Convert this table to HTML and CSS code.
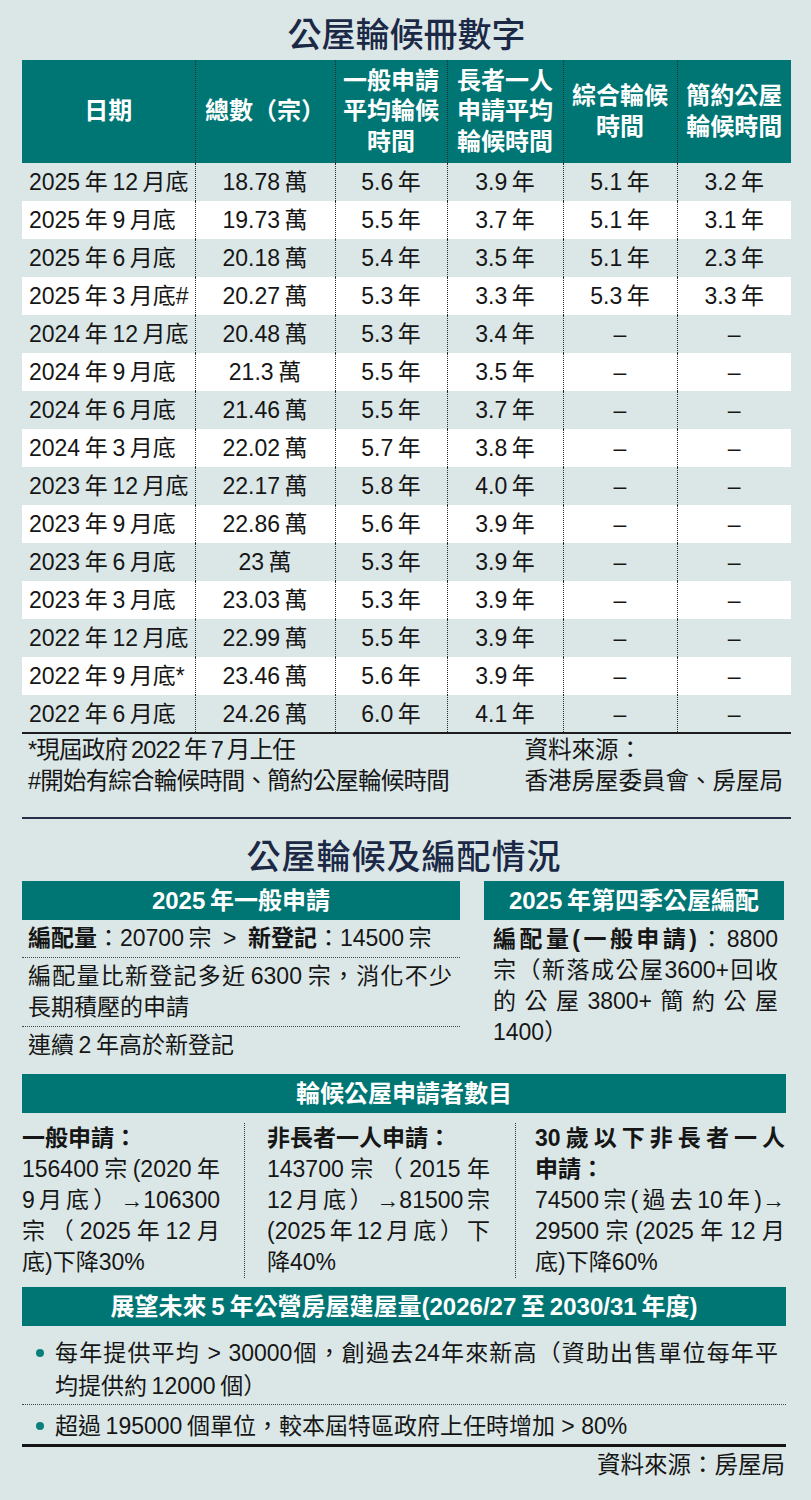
FILE: index.html
```html
<!DOCTYPE html>
<html lang="zh-Hant">
<head>
<meta charset="utf-8">
<title>公屋輪候冊數字</title>
<link rel="stylesheet" href="styles.css">
</head>
<body>
<main class="page">
  <h1 class="title">公屋輪候冊數字</h1>
  <table class="wait">
    <colgroup>
      <col class="c1"><col class="c2"><col class="c3"><col class="c4"><col class="c5"><col class="c6">
    </colgroup>
    <thead>
      <tr>
        <th>日期</th>
        <th>總數（宗）</th>
        <th>一般申請<br>平均輪候<br>時間</th>
        <th>長者一人<br>申請平均<br>輪候時間</th>
        <th>綜合輪候<br>時間</th>
        <th>簡約公屋<br>輪候時間</th>
      </tr>
    </thead>
    <tbody>
      <tr><td>2025&thinsp;年&thinsp;12&thinsp;月底</td><td>18.78&thinsp;萬</td><td>5.6&thinsp;年</td><td>3.9&thinsp;年</td><td>5.1&thinsp;年</td><td>3.2&thinsp;年</td></tr>
      <tr><td>2025&thinsp;年&thinsp;9&thinsp;月底</td><td>19.73&thinsp;萬</td><td>5.5&thinsp;年</td><td>3.7&thinsp;年</td><td>5.1&thinsp;年</td><td>3.1&thinsp;年</td></tr>
      <tr><td>2025&thinsp;年&thinsp;6&thinsp;月底</td><td>20.18&thinsp;萬</td><td>5.4&thinsp;年</td><td>3.5&thinsp;年</td><td>5.1&thinsp;年</td><td>2.3&thinsp;年</td></tr>
      <tr><td>2025&thinsp;年&thinsp;3&thinsp;月底#</td><td>20.27&thinsp;萬</td><td>5.3&thinsp;年</td><td>3.3&thinsp;年</td><td>5.3&thinsp;年</td><td>3.3&thinsp;年</td></tr>
      <tr><td>2024&thinsp;年&thinsp;12&thinsp;月底</td><td>20.48&thinsp;萬</td><td>5.3&thinsp;年</td><td>3.4&thinsp;年</td><td>–</td><td>–</td></tr>
      <tr><td>2024&thinsp;年&thinsp;9&thinsp;月底</td><td>21.3&thinsp;萬</td><td>5.5&thinsp;年</td><td>3.5&thinsp;年</td><td>–</td><td>–</td></tr>
      <tr><td>2024&thinsp;年&thinsp;6&thinsp;月底</td><td>21.46&thinsp;萬</td><td>5.5&thinsp;年</td><td>3.7&thinsp;年</td><td>–</td><td>–</td></tr>
      <tr><td>2024&thinsp;年&thinsp;3&thinsp;月底</td><td>22.02&thinsp;萬</td><td>5.7&thinsp;年</td><td>3.8&thinsp;年</td><td>–</td><td>–</td></tr>
      <tr><td>2023&thinsp;年&thinsp;12&thinsp;月底</td><td>22.17&thinsp;萬</td><td>5.8&thinsp;年</td><td>4.0&thinsp;年</td><td>–</td><td>–</td></tr>
      <tr><td>2023&thinsp;年&thinsp;9&thinsp;月底</td><td>22.86&thinsp;萬</td><td>5.6&thinsp;年</td><td>3.9&thinsp;年</td><td>–</td><td>–</td></tr>
      <tr><td>2023&thinsp;年&thinsp;6&thinsp;月底</td><td>23&thinsp;萬</td><td>5.3&thinsp;年</td><td>3.9&thinsp;年</td><td>–</td><td>–</td></tr>
      <tr><td>2023&thinsp;年&thinsp;3&thinsp;月底</td><td>23.03&thinsp;萬</td><td>5.3&thinsp;年</td><td>3.9&thinsp;年</td><td>–</td><td>–</td></tr>
      <tr><td>2022&thinsp;年&thinsp;12&thinsp;月底</td><td>22.99&thinsp;萬</td><td>5.5&thinsp;年</td><td>3.9&thinsp;年</td><td>–</td><td>–</td></tr>
      <tr><td>2022&thinsp;年&thinsp;9&thinsp;月底*</td><td>23.46&thinsp;萬</td><td>5.6&thinsp;年</td><td>3.9&thinsp;年</td><td>–</td><td>–</td></tr>
      <tr><td>2022&thinsp;年&thinsp;6&thinsp;月底</td><td>24.26&thinsp;萬</td><td>6.0&thinsp;年</td><td>4.1&thinsp;年</td><td>–</td><td>–</td></tr>
    </tbody>
  </table>

  <div class="notes">
    <div class="notes-l">
      <p>*現屆政府&thinsp;2022&thinsp;年&thinsp;7&thinsp;月上任</p>
      <p>#開始有綜合輪候時間、簡約公屋輪候時間</p>
    </div>
    <div class="notes-r">
      <p>資料來源：</p>
      <p>香港房屋委員會、房屋局</p>
    </div>
  </div>

  <h2 class="title title2">公屋輪候及編配情況</h2>

  <div class="alloc">
    <section class="alloc-l">
      <h3 class="bar">2025&thinsp;年一般申請</h3>
      <ul class="items">
        <li><b>編配量</b>：20700&thinsp;宗&ensp;&gt;&ensp;<b>新登記</b>：14500&thinsp;宗</li>
        <li><span class="j">編配量比新登記多近&thinsp;6300&thinsp;宗，消化不少</span>長期積壓的申請</li>
        <li>連續&thinsp;2&thinsp;年高於新登記</li>
      </ul>
    </section>
    <section class="alloc-r">
      <h3 class="bar">2025&thinsp;年第四季公屋編配</h3>
      <p class="rtext"><span class="j"><b>編配量(一般申請)</b>：8800</span><span class="j">宗（新落成公屋3600+回收</span><span class="j">的公屋3800+簡約公屋</span><span class="l">1400）</span></p>
    </section>
  </div>

  <section class="queue">
    <h3 class="bar">輪候公屋申請者數目</h3>
    <div class="cols">
      <div class="col">
        <b class="l">一般申請：</b>
        <span class="j">156400宗(2020年</span>
        <span class="j">9月底）→106300</span>
        <span class="j">宗（2025年12月</span>
        <span class="l">底)下降30%</span>
      </div>
      <div class="col">
        <b class="l">非長者一人申請：</b>
        <span class="j">143700宗（2015年</span>
        <span class="j">12月底）→81500宗</span>
        <span class="j">(2025年12月底）下</span>
        <span class="l">降40%</span>
      </div>
      <div class="col">
        <b class="j">30歲以下非長者一人</b>
        <b class="l">申請：</b>
        <span class="j">74500宗(過去10年)→</span>
        <span class="j">29500宗(2025年12月</span>
        <span class="l">底)下降60%</span>
      </div>
    </div>
  </section>

  <section class="outlook">
    <h3 class="bar">展望未來&thinsp;5&thinsp;年公營房屋建屋量(2026/27&thinsp;至&thinsp;2030/31&thinsp;年度)</h3>
    <ul class="bullets">
      <li><div><span class="j">每年提供平均 &gt; 30000個，創過去24年來新高（資助出售單位每年平</span>均提供約&thinsp;12000&thinsp;個）</div></li>
      <li><div>超過&thinsp;195000&thinsp;個單位，較本屆特區政府上任時增加 &gt; 80%</div></li>
    </ul>
    <p class="source">資料來源：房屋局</p>
  </section>
</main>
</body>
</html>
```

FILE: styles.css
```css
* {
  box-sizing: border-box;
  margin: 0;
  padding: 0;
}

html,
body {
  background: #dbe7e7;
}

body {
  width: 811px;
  font-family: "Liberation Sans", "Noto Sans CJK TC", sans-serif;
  color: #161616;
  font-size: 23px;
}

.page {
  padding-left: 22px;
}

.title {
  width: 769px;
  padding-top: 6px;
  font-family: "Noto Sans CJK TC", sans-serif;
  font-size: 34px;
  font-weight: 500;
  line-height: 54px;
  color: #1b2946;
  text-align: center;
}

.title2 {
  width: 764px;
  padding-top: 10px;
  line-height: 52px;
  letter-spacing: 1px;
}

/* ---------- waiting list table ---------- */
.wait {
  width: 769px;
  border-collapse: collapse;
  table-layout: fixed;
  font-size: 23px;
}

.c1 { width: 173px; }
.c2 { width: 140px; }
.c3 { width: 112px; }
.c4 { width: 116px; }
.c5 { width: 114px; }
.c6 { width: 114px; }

.wait th {
  height: 103px;
  padding: 0;
  background: #007674;
  color: #fff;
  font-size: 24px;
  font-weight: 700;
  line-height: 30.5px;
  text-align: center;
  vertical-align: middle;
}

.wait td {
  height: 38px;
  padding: 0;
  line-height: 36px;
  text-align: center;
  white-space: nowrap;
  background: #dbe7e7;
}

.wait tbody tr:nth-child(even) td {
  background: #ffffff;
}

.wait th + th,
.wait td + td {
  border-left: 1px dotted #2a2a2a;
}

.wait td:first-child {
  text-align: left;
  padding-left: 7px;
}

.wait tbody tr:last-child td {
  border-bottom: 2px solid #1d1d1d;
}

/* ---------- notes ---------- */
.notes {
  width: 769px;
  display: flex;
  justify-content: space-between;
  padding: 1px 8px 20px 6px;
  border-bottom: 2px solid #27324a;
  font-size: 23.5px;
  line-height: 31px;
}

.notes-l {
  letter-spacing: -0.8px;
}

/* ---------- bars ---------- */
.bar {
  height: 39px;
  background: #007674;
  color: #fff;
  font-size: 24px;
  font-weight: 700;
  line-height: 39px;
  text-align: center;
  white-space: nowrap;
}

.j {
  display: block;
  text-align: justify;
  text-align-last: justify;
}

.l {
  display: block;
}

/* ---------- allocation ---------- */
.alloc {
  width: 764px;
  display: grid;
  grid-template-columns: 438px 300px;
  column-gap: 24px;
  align-items: start;
}

.items {
  list-style: none;
}

.items li {
  padding: 3px 8px 3px 6px;
  line-height: 31px;
  border-bottom: 1px dotted #444;
}

.items li:last-child {
  border-bottom: none;
}

.rtext {
  padding: 4px 6px 0 9px;
  line-height: 31px;
}

/* ---------- queue numbers ---------- */
.queue {
  width: 764px;
  margin-top: 10px;
}

.cols {
  display: grid;
  grid-template-columns: 222px 271px 271px;
  padding-top: 10px;
  line-height: 31px;
}

.col {
  padding-right: 24px;
}

.col + .col {
  border-left: 1px dotted #333;
  padding-left: 22px;
  padding-right: 25px;
}

.col:last-child {
  padding-left: 19px;
  padding-right: 1px;
}

/* ---------- outlook ---------- */
.outlook {
  width: 764px;
  margin-top: 9px;
}

.bullets {
  list-style: none;
  border-bottom: 3px solid #141414;
}

.bullets li {
  display: grid;
  grid-template-columns: 33px 1fr;
  line-height: 33px;
  padding: 11px 8px 1px 0;
  border-bottom: 1px dotted #444;
}

.bullets li + li {
  padding-top: 5px;
  border-bottom: none;
}

.bullets li::before {
  content: "";
  width: 8px;
  height: 8px;
  margin: 12px 0 0 14px;
  border-radius: 50%;
  background: #0a7f7b;
}

.source {
  padding: 2px 1px 0 0;
  line-height: 32px;
  text-align: right;
  font-size: 23.5px;
}
```
